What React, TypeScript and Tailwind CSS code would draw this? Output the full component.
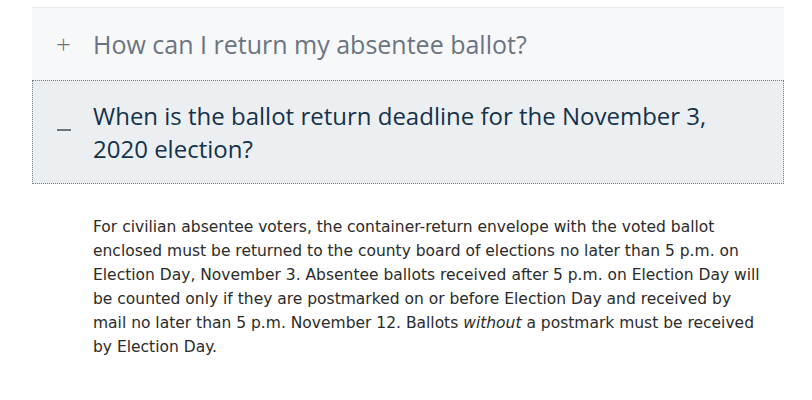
export default function App() {
  return (
    <div className="w-[812px] h-[400px] bg-white pt-[7px] pl-[32px]" style={{ fontFamily: '"Open Sans", "Noto Sans", sans-serif' }}>
      <div className="w-[752px]">
        <div className="border-t border-[#e7eaee] bg-[#f7f8fa] h-[73px] flex items-center">
          <span className="w-[61px] pl-[24px] text-[26px] leading-none text-[#6b7480] font-light">+</span>
          <span className="text-[25px] text-[#6b7480] leading-[32px]">How can I return my absentee ballot?</span>
        </div>
        <div className="border border-dotted border-[#6f7f8e] bg-[#eceff2] h-[104px] flex items-center">
          <span className="w-[60px] pl-[24px] self-start mt-[48px]"><span className="block w-[14px] h-[2px] bg-[#6b7480]"></span></span>
          <span className="text-[24px] text-[#14324a] leading-[33px] w-[660px]">When is the ballot return deadline for the November 3, 2020 election?</span>
        </div>
        <div className="pl-[61px] pt-[31px]">
          <p className="w-[670px] text-[15.5px] leading-[24px] text-[#2b2b2b]" style={{ fontFamily: '"DejaVu Sans", sans-serif' }}>
            For civilian absentee voters, the container-return envelope with the voted ballot enclosed must be returned to the county board of elections no later than 5 p.m. on Election Day, November 3. Absentee ballots received after 5 p.m. on Election Day will be counted only if they are postmarked on or before Election Day and received by mail no later than 5 p.m. November 12. Ballots <em>without</em> a postmark must be received by Election Day.
          </p>
        </div>
      </div>
    </div>
  );
}
